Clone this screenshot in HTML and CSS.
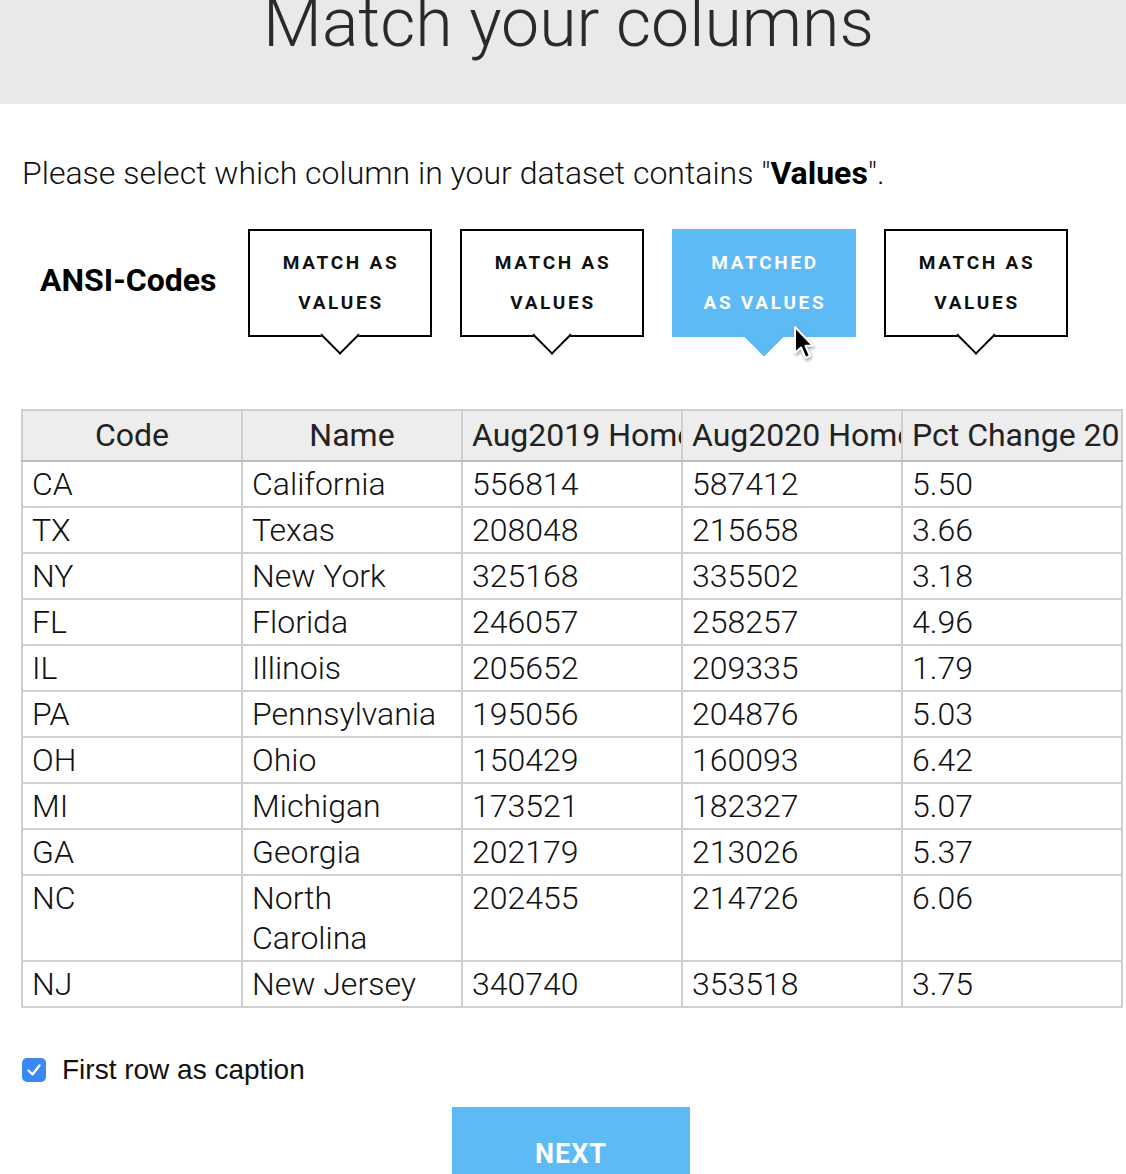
FILE: index.html
```html
<!DOCTYPE html>
<html>
<head>
<meta charset="utf-8">
<link rel="stylesheet" href="styles.css">
</head>
<body>
<header class="top">
  <h1 class="title">Match your columns</h1>
</header>
<main class="content">
  <p class="prompt">Please select which column in your dataset contains "<b>Values</b>".</p>
  <div class="matchrow">
    <div class="colname">ANSI-Codes</div>
    <div class="choices">
      <button class="choice">MATCH AS<br>VALUES</button>
      <button class="choice">MATCH AS<br>VALUES</button>
      <button class="choice active">MATCHED<br>AS VALUES
        <svg class="cursor" width="24" height="38" viewBox="0 0 24 38"><path d="M3 2 L3 28 L9 22.5 L13.5 33 L18 31 L13.5 20.8 L21 20.8 Z" fill="#000" stroke="#fff" stroke-width="2" stroke-linejoin="round"/></svg>
      </button>
      <button class="choice">MATCH AS<br>VALUES</button>
    </div>
  </div>
  <table class="data">
    <colgroup><col><col><col><col><col></colgroup>
    <thead>
      <tr><th>Code</th><th>Name</th><th>Aug2019 Home Value</th><th>Aug2020 Home Value</th><th>Pct Change 2019-2020</th></tr>
    </thead>
    <tbody>
      <tr><td>CA</td><td>California</td><td>556814</td><td>587412</td><td>5.50</td></tr>
      <tr><td>TX</td><td>Texas</td><td>208048</td><td>215658</td><td>3.66</td></tr>
      <tr><td>NY</td><td>New York</td><td>325168</td><td>335502</td><td>3.18</td></tr>
      <tr><td>FL</td><td>Florida</td><td>246057</td><td>258257</td><td>4.96</td></tr>
      <tr><td>IL</td><td>Illinois</td><td>205652</td><td>209335</td><td>1.79</td></tr>
      <tr><td>PA</td><td>Pennsylvania</td><td>195056</td><td>204876</td><td>5.03</td></tr>
      <tr><td>OH</td><td>Ohio</td><td>150429</td><td>160093</td><td>6.42</td></tr>
      <tr><td>MI</td><td>Michigan</td><td>173521</td><td>182327</td><td>5.07</td></tr>
      <tr><td>GA</td><td>Georgia</td><td>202179</td><td>213026</td><td>5.37</td></tr>
      <tr><td>NC</td><td>North<br>Carolina</td><td>202455</td><td>214726</td><td>6.06</td></tr>
      <tr><td>NJ</td><td>New Jersey</td><td>340740</td><td>353518</td><td>3.75</td></tr>
    </tbody>
  </table>
  <label class="check">
    <span class="box"><svg width="24" height="24" viewBox="0 0 24 24"><path d="M6.5 12.5 L10.5 16.5 L17.5 7.5" fill="none" stroke="#fff" stroke-width="2.4" stroke-linecap="round" stroke-linejoin="round"/></svg></span>
    <span class="checklabel">First row as caption</span>
  </label>
  <div class="actions">
    <button class="next">NEXT</button>
  </div>
</main>
</body>
</html>
```
FILE: styles.css
```css
html, body {
  margin: 0;
  padding: 0;
  background: #fff;
  overflow: hidden;
}
body {
  font-family: Roboto, "Noto Sans", sans-serif;
  color: #000;
  width: 1126px;
  height: 1174px;
}
.top {
  background: #e9e9e9;
  height: 104px;
  overflow: hidden;
}
.title {
  margin: -17px 0 0;
  font-size: 68px;
  font-weight: 300;
  line-height: 80px;
  text-align: center;
  color: #2a2a2a;
  padding-left: 11px;
}
.content {
  padding: 0 0 0 22px;
}
.prompt {
  margin: 47px 0 0;
  font-size: 32px;
  font-weight: 300;
  line-height: 44px;
  color: #111;
}
.prompt b {
  font-weight: 700;
  color: #000;
}
.matchrow {
  display: flex;
  align-items: flex-start;
  margin-top: 34px;
}
.colname {
  width: 226px;
  font-size: 32px;
  font-weight: 700;
  line-height: 40px;
  padding-top: 31px;
  padding-left: 18px;
  box-sizing: border-box;
}
.choices {
  display: flex;
  gap: 28px;
}
.choice {
  position: relative;
  width: 184px;
  height: 108px;
  box-sizing: border-box;
  border: 2px solid #000;
  background: #fff;
  font-family: Roboto, sans-serif;
  font-size: 19px;
  font-weight: 700;
  letter-spacing: 2.7px;
  line-height: 40px;
  color: #111;
  padding: 0 0 0 2px;
  margin: 0;
  cursor: pointer;
}
.choice::after {
  content: "";
  position: absolute;
  left: 50%;
  bottom: -14px;
  width: 28px;
  height: 28px;
  margin-left: -14px;
  box-sizing: border-box;
  background: #fff;
  border-right: 2px solid #000;
  border-bottom: 2px solid #000;
  transform: rotate(45deg);
}
.choice.active {
  background: #5dbaf5;
  border-color: #5dbaf5;
  color: #fff;
}
.choice.active::after {
  background: #5dbaf5;
  border-color: #5dbaf5;
  width: 30px;
  height: 30px;
  margin-left: -15px;
  bottom: -15px;
}
.cursor {
  position: absolute;
  left: 118px;
  top: 94px;
  z-index: 3;
  filter: drop-shadow(1px 2px 1.5px rgba(0,0,0,0.35));
}
.data {
  margin-top: 72px;
  margin-left: -1px;
  border-collapse: collapse;
  table-layout: fixed;
  width: 1100px;
  font-size: 32px;
  font-weight: 300;
  color: #111;
}
.data col {
  width: 220px;
}
.data th, .data td {
  border: 2px solid #cfcfcf;
  overflow: hidden;
  white-space: nowrap;
  text-overflow: clip;
  padding: 2px 9px;
  line-height: 40px;
  vertical-align: top;
  text-align: left;
}
.data td {
  white-space: normal;
}
.data th {
  background: #ededed;
  font-weight: 400;
  text-align: center;
  padding: 4px 9px 5px;
  color: #222;
  box-shadow: 0 3px 3px -1px rgba(0,0,0,0.3);
  position: relative;
  border-bottom-color: #bdbdbd;
}
.check {
  display: flex;
  align-items: center;
  gap: 16px;
  margin-top: 46px;
}
.box {
  width: 24px;
  height: 24px;
  border-radius: 5px;
  background: #3b87f6;
  display: flex;
}
.checklabel {
  font-family: "Liberation Sans", Arial, sans-serif;
  font-size: 28px;
  color: #111;
}
.actions {
  display: flex;
  justify-content: center;
  padding-right: 6px;
  margin-top: 21px;
}
.next {
  width: 238px;
  height: 80px;
  border: 0;
  background: #5dbaf5;
  color: #fff;
  font-family: Roboto, sans-serif;
  font-size: 27px;
  font-weight: 700;
  letter-spacing: 1px;
  padding: 14px 0 0;
  margin: 0;
}
```
